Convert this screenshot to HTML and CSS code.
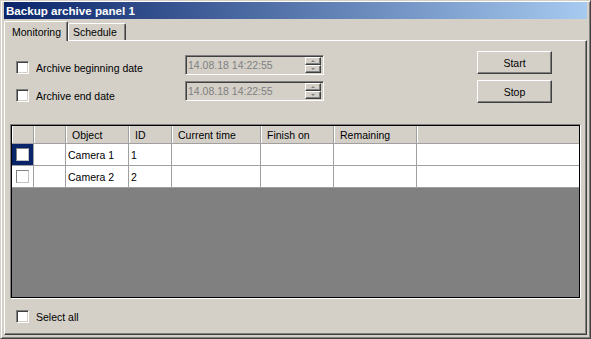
FILE: index.html
```html
<!DOCTYPE html>
<html>
<head>
<meta charset="utf-8">
<link rel="stylesheet" href="styles.css">
</head>
<body>
<div class="window">
  <div class="titlebar"><span class="title">Backup archive panel 1</span></div>
  <div class="tabs">
    <div class="tab active">Monitoring</div>
    <div class="tab">Schedule</div>
  </div>
  <div class="panel">
    <div class="top">
      <div class="col-checks">
        <div class="check"><span class="cb"></span><span>Archive beginning date</span></div>
        <div class="check"><span class="cb"></span><span>Archive end date</span></div>
      </div>
      <div class="col-dates">
        <div class="date"><span class="date-text">14.08.18 14:22:55</span><span class="spin"><span class="spin-btn"><span class="arrow up"></span></span><span class="spin-btn"><span class="arrow down"></span></span></span></div>
        <div class="date"><span class="date-text">14.08.18 14:22:55</span><span class="spin"><span class="spin-btn"><span class="arrow up"></span></span><span class="spin-btn"><span class="arrow down"></span></span></span></div>
      </div>
      <div class="col-buttons">
        <div class="btn">Start</div>
        <div class="btn">Stop</div>
      </div>
    </div>
    <div class="grid">
      <div class="grid-inner">
        <div class="row header">
          <div class="cell"></div>
          <div class="cell"></div>
          <div class="cell">Object</div>
          <div class="cell">ID</div>
          <div class="cell">Current time</div>
          <div class="cell">Finish on</div>
          <div class="cell">Remaining</div>
          <div class="cell last"></div>
        </div>
        <div class="row">
          <div class="cell cbcell focused"><span class="gcb"></span></div>
          <div class="cell"></div>
          <div class="cell">Camera 1</div>
          <div class="cell">1</div>
          <div class="cell"></div>
          <div class="cell"></div>
          <div class="cell"></div>
          <div class="cell last"></div>
        </div>
        <div class="row">
          <div class="cell cbcell"><span class="gcb"></span></div>
          <div class="cell"></div>
          <div class="cell">Camera 2</div>
          <div class="cell">2</div>
          <div class="cell"></div>
          <div class="cell"></div>
          <div class="cell"></div>
          <div class="cell last"></div>
        </div>
        <div class="grid-empty"></div>
      </div>
    </div>
    <div class="check select-all"><span class="cb"></span><span>Select all</span></div>
  </div>
</div>
</body>
</html>
```

FILE: styles.css
```css
* { box-sizing: border-box; }
html, body { margin: 0; padding: 0; background: #d4d0c8; }
body {
  font-family: "Liberation Sans", Arial, sans-serif;
  font-size: 10.5px;
  color: #000;
}
.window {
  width: 591px;
  height: 339px;
  background: #d4d0c8;
  border: 1px solid;
  border-color: #d4d0c8 #404040 #404040 #d4d0c8;
  box-shadow: inset 1px 1px #fff, inset -1px -1px #808080;
  padding: 1px 3px 3px 3px;
  display: flex;
  flex-direction: column;
}
.titlebar {
  height: 17px;
  flex: none;
  background: linear-gradient(to right, #0a246a, #a6caf0);
  display: flex;
  align-items: center;
  padding-left: 2px;
}
.title {
  color: #fff;
  font-weight: bold;
  font-size: 11.6px;
  line-height: 17px;
}
.tabs {
  height: 21px;
  flex: none;
  display: flex;
  align-items: flex-end;
  position: relative;
  z-index: 1;
}
.tab {
  height: 17px;
  border: 1px solid;
  border-bottom: none;
  border-color: #fff #404040 #404040 #fff;
  box-shadow: inset -1px 0 #808080;
  border-radius: 2px 2px 0 0;
  display: flex;
  align-items: center;
  padding-left: 4px;
  width: 58px;
  background: #d4d0c8;
}
.tab.active {
  height: 20px;
  width: 64px;
  margin-bottom: -1px;
  padding-left: 7px;
}
.panel {
  flex: 1;
  border: 1px solid;
  border-color: #fff #404040 #404040 #fff;
  box-shadow: inset -1px -1px #808080;
  display: flex;
  flex-direction: column;
}
.top {
  display: flex;
  align-items: flex-start;
  height: 62px;
}
.col-checks {
  margin-left: 11px;
  margin-top: 20px;
  width: 169px;
  display: flex;
  flex-direction: column;
  gap: 15px;
}
.check {
  display: flex;
  align-items: center;
  height: 13px;
  white-space: nowrap;
}
.cb {
  width: 13px;
  height: 13px;
  flex: none;
  background: #fff;
  border: 1px solid;
  border-color: #808080 #fff #fff #808080;
  box-shadow: inset 1px 1px #404040, inset -1px -1px #d4d0c8;
  margin-right: 7px;
}
.col-dates {
  margin-top: 14px;
  width: 139px;
  display: flex;
  flex-direction: column;
  gap: 6px;
}
.date {
  height: 20px;
  border: 1px solid;
  border-color: #808080 #fff #fff #808080;
  box-shadow: inset 1px 1px #404040, inset -1px -1px #d4d0c8;
  padding: 2px 2px 2px 2px;
  display: flex;
  align-items: center;
  background: #d4d0c8;
}
.date-text {
  flex: 1;
  color: #808080;
  font-size: 10.5px;
  line-height: 16px;
}
.spin {
  width: 16px;
  height: 16px;
  display: flex;
  flex-direction: column;
}
.spin-btn {
  height: 8px;
  border: 1px solid;
  border-color: #fff #404040 #404040 #fff;
  box-shadow: inset -1px -1px #808080;
  background: #d4d0c8;
  display: flex;
  align-items: center;
  justify-content: center;
}
.arrow {
  width: 0;
  height: 0;
  border-left: 2px solid transparent;
  border-right: 2px solid transparent;
}
.arrow.up { border-bottom: 2px solid #808080; }
.arrow.down { border-top: 2px solid #808080; }
.col-buttons {
  margin-left: 153px;
  margin-top: 10px;
  display: flex;
  flex-direction: column;
  gap: 6px;
}
.btn {
  width: 75px;
  height: 23px;
  border: 1px solid;
  border-color: #fff #404040 #404040 #fff;
  box-shadow: inset -1px -1px #808080;
  display: flex;
  align-items: center;
  justify-content: center;
  font-size: 10.5px;
}
.grid {
  margin: 21px 5px 0 5px;
  height: 175px;
  border: 1px solid;
  border-color: #808080 #fff #fff #808080;
}
.grid-inner {
  height: 100%;
  border: 1px solid #000;
  display: flex;
  flex-direction: column;
  background: #808080;
}
.row {
  display: grid;
  grid-template-columns: 22px 32px 63px 43px 89px 73px 83px 1fr;
  height: 22px;
  background: #fff;
}
.row.header {
  height: 18px;
  background: #d4d0c8;
}
.cell {
  border-right: 1px solid #a0a0a0;
  border-bottom: 1px solid #a0a0a0;
  padding-left: 2px;
  display: flex;
  align-items: center;
  white-space: nowrap;
}
.header .cell {
  padding-left: 6px;
  border-right: 1px solid #a0a0a0;
  box-shadow: inset 1px 0 #fff;
}
.cell.last { border-right: none; }
.cbcell { justify-content: center; padding-left: 0; }
.cell.focused { background: #0a246a; }
.gcb {
  width: 13px;
  height: 13px;
  background: #fff;
  border: 1px solid;
  border-color: #808080 #c0c0c0 #c0c0c0 #808080;
}
.grid-empty { flex: 1; }
.select-all {
  margin-left: 11px;
  margin-top: 11px;
}
```
